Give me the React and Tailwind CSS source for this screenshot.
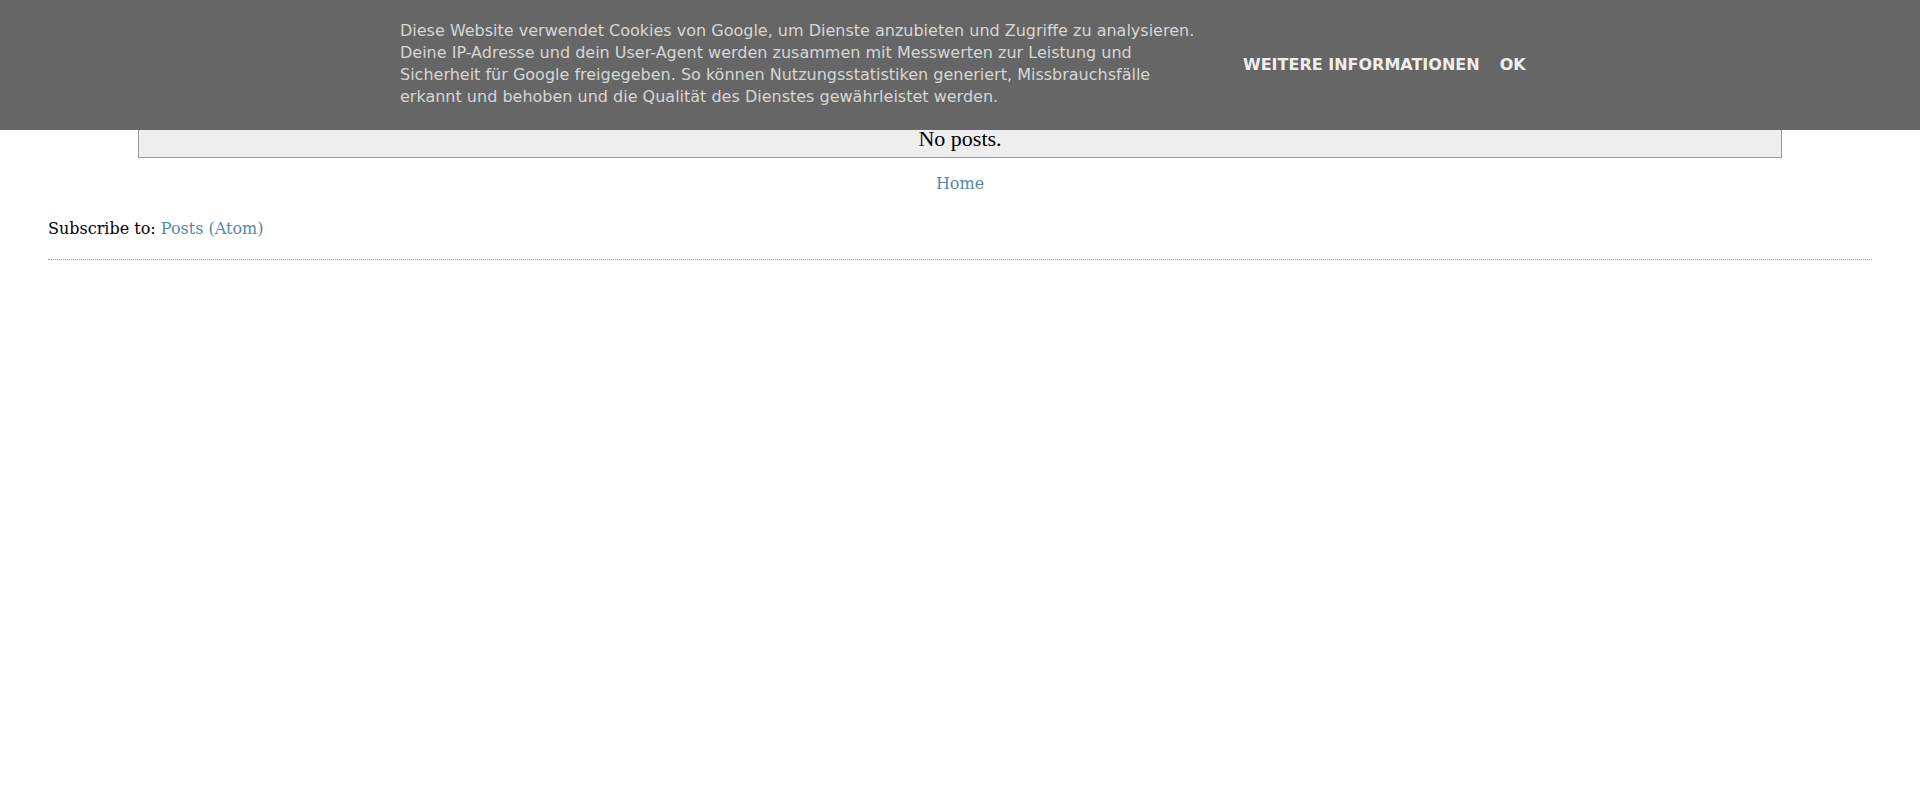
import React from 'react'

function CookieBar() {
  return (
    <div className="fixed top-0 left-0 right-0 h-[130px] bg-[#666] z-50">
      <div className="flex items-center pt-[20px] pl-[400px]">
        <div className="w-[800px] text-[16px] leading-[22px] text-[#d6d6d6] whitespace-nowrap font-['DejaVu_Sans',sans-serif]">
          Diese Website verwendet Cookies von Google, um Dienste anzubieten und Zugriffe zu analysieren.
          <br />
          Deine IP-Adresse und dein User-Agent werden zusammen mit Messwerten zur Leistung und
          <br />
          Sicherheit für Google freigegeben. So können Nutzungsstatistiken generiert, Missbrauchsfälle
          <br />
          erkannt und behoben und die Qualität des Dienstes gewährleistet werden.
        </div>
        <div className="flex ml-[37px] mt-[2px] font-['DejaVu_Sans',sans-serif] text-[16px] leading-[18px] font-bold text-[#eee] uppercase">
          <a className="px-[6px]">Weitere Informationen</a>
          <a className="px-[6px] ml-[8px]">OK</a>
        </div>
      </div>
    </div>
  )
}

export default function App() {
  return (
    <div className="min-h-screen bg-white text-black font-['DejaVu_Serif',serif]">
      <CookieBar />
      <div className="px-[48px] pt-[118px]">
        <div className="w-[1644px] mx-auto border border-[#999] bg-[#eee] pt-[7px] pb-[5px] text-center font-['Liberation_Serif',serif] text-[22px] leading-[26px]">
          No posts.
        </div>
        <div className="mt-[16px] text-center text-[16px] leading-[20px]">
          <a className="text-[#5588aa]">Home</a>
        </div>
        <div className="mt-[25px] text-[16px] leading-[20px]">
          Subscribe to: <a className="text-[#5588aa]">Posts (Atom)</a>
        </div>
        <div className="mt-[20px] border-t border-dotted border-[#999]" />
      </div>
    </div>
  )
}
